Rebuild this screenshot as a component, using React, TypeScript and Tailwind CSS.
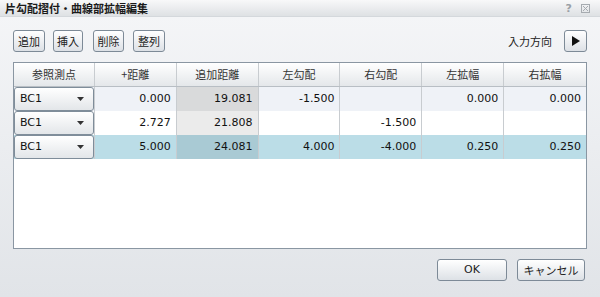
import React from "react";

const cols = ["参照測点", "+距離", "追加距離", "左勾配", "右勾配", "左拡幅", "右拡幅"];

const rows = [
  { dist: "0.000", add: "19.081", lg: "-1.500", rg: "", lw: "0.000", rw: "0.000" },
  { dist: "2.727", add: "21.808", lg: "", rg: "-1.500", lw: "", rw: "" },
  { dist: "5.000", add: "24.081", lg: "4.000", rg: "-4.000", lw: "0.250", rw: "0.250" },
];

const jp = "font-['Noto_Sans_CJK_JP',sans-serif]";
const num = "font-['DejaVu_Sans',sans-serif]";

function ToolButton({ label, w }: { label: string; w: string }) {
  return (
    <button
      className={`${w} h-[22px] rounded-[3px] border border-[#7d8a97] bg-gradient-to-b from-white to-[#dde1e6] text-[11px] text-[#222] leading-none flex items-center justify-center ${jp}`}
    >
      {label}
    </button>
  );
}

export default function App() {
  return (
    <div className="w-[600px] h-[297px] flex flex-col bg-gradient-to-b from-[#f5f6f8] to-[#e1e4e8] overflow-hidden">
      {/* title bar */}
      <div className="h-[17px] flex items-center justify-between bg-gradient-to-b from-[#f8f8f9] to-[#dee1e4] border-b border-[#d4d8dc]">
        <span className={`pl-[5px] text-[11px] font-bold text-[#1a1a1a] leading-none ${jp}`}>
          片勾配摺付・曲線部拡幅編集
        </span>
        <div className="flex items-center gap-[9px] pr-[10px] text-[#9aa0a6]">
          <span className="text-[11px] font-bold leading-none font-['DejaVu_Sans',sans-serif]">?</span>
          <svg width="9" height="9" viewBox="0 0 9 9">
            <rect x="0.5" y="0.5" width="8" height="8" fill="none" stroke="#a6abb0" />
            <path d="M2 2 L7 7 M7 2 L2 7" stroke="#a6abb0" strokeWidth="1" />
          </svg>
        </div>
      </div>

      {/* toolbar */}
      <div className="mt-[13px] px-[13px] flex items-center h-[22px]">
        <ToolButton label="追加" w="w-[32px]" />
        <div className="w-[8px]" />
        <ToolButton label="挿入" w="w-[30px]" />
        <div className="w-[10px]" />
        <ToolButton label="削除" w="w-[31px]" />
        <div className="w-[9px]" />
        <ToolButton label="整列" w="w-[32px]" />
        <div className="flex-1" />
        <span className={`text-[11px] text-[#222] mr-[12px] ${jp}`}>入力方向</span>
        <button className="w-[23px] h-[22px] rounded-[3px] border border-[#7d8a97] bg-gradient-to-b from-white to-[#dde1e6] flex items-center justify-center">
          <svg width="9" height="10" viewBox="0 0 9 10">
            <path d="M1 0 L9 5 L1 10 Z" fill="#111" />
          </svg>
        </button>
      </div>

      {/* table */}
      <div className="mt-[10px] ml-[13px] w-[574px] h-[187px] border border-[#8a96a2] bg-white flex flex-col">
        <div className="flex h-[24px] border-b border-[#b8bec4] bg-gradient-to-b from-white to-[#e4e7ea]">
          {cols.map((c, i) => (
            <div
              key={c}
              className={`${i === 0 ? "w-[81px]" : "w-[82px]"} ${i < 6 ? "border-r border-[#c8ccd0]" : ""} flex items-center justify-center text-[11px] text-[#333] ${jp}`}
            >
              {c}
            </div>
          ))}
        </div>
        {rows.map((r, ri) => {
          const bg = ri === 0 ? "bg-[#eff2f7]" : ri === 1 ? "bg-white" : "bg-[#bbdde7]";
          const addBg = ri === 0 ? "bg-[#d9dadb]" : ri === 1 ? "bg-[#ebebeb]" : "bg-[#a9cad4]";
          const vals = [r.dist, r.add, r.lg, r.rg, r.lw, r.rw];
          return (
            <div key={ri} className={`flex h-[24px] ${bg}`}>
              <div className="w-[81px] border-r border-[#c8ccd0] flex items-stretch">
                <div className="flex-1 m-[0px] mr-[0px] rounded-[3px] border border-[#7f8d9a] bg-gradient-to-b from-white to-[#e3e6e9] flex items-center justify-between pl-[5px] pr-[9px]">
                  <span className={`text-[11px] text-[#111] ${num}`}>BC1</span>
                  <svg width="7" height="4" viewBox="0 0 7 4">
                    <path d="M0 0 L7 0 L3.5 4 Z" fill="#333" />
                  </svg>
                </div>
              </div>
              {vals.map((v, vi) => (
                <div
                  key={vi}
                  className={`w-[82px] ${vi < 5 ? "border-r border-[#c8ccd0]" : ""} ${vi === 1 ? addBg : ""} flex items-center justify-end pr-[5px] text-[11px] text-[#111] ${num}`}
                >
                  {v}
                </div>
              ))}
            </div>
          );
        })}
      </div>

      {/* footer */}
      <div className="mt-[10px] flex justify-end pr-[15px] gap-[10px]">
        <button className={`w-[70px] h-[22px] rounded-[3px] border border-[#7d8a97] bg-gradient-to-b from-white to-[#dde1e6] text-[11px] text-[#222] ${num}`}>
          OK
        </button>
        <button className={`w-[68px] h-[22px] rounded-[3px] border border-[#7d8a97] bg-gradient-to-b from-white to-[#dde1e6] text-[11px] text-[#222] ${jp}`}>
          キャンセル
        </button>
      </div>
    </div>
  );
}
